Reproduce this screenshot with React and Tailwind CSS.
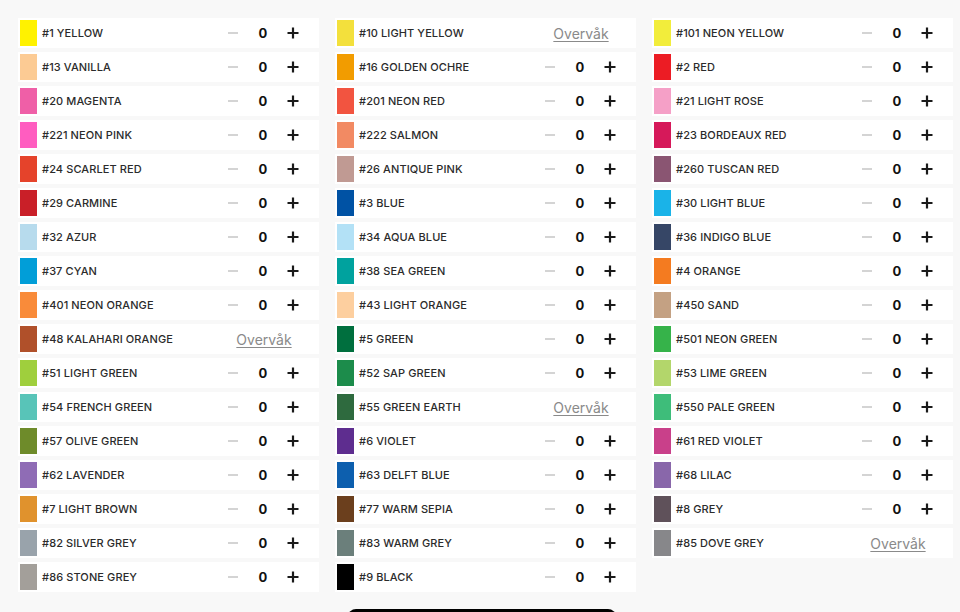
import React from "react";

const columns = [
  [
    ["#1 YELLOW", "#fff200"],
    ["#13 VANILLA", "#fccb94"],
    ["#20 MAGENTA", "#ef5fa7"],
    ["#221 NEON PINK", "#ff5dc0"],
    ["#24 SCARLET RED", "#e5432b"],
    ["#29 CARMINE", "#c91f28"],
    ["#32 AZUR", "#b7dbed"],
    ["#37 CYAN", "#019ed8"],
    ["#401 NEON ORANGE", "#f98b3a"],
    ["#48 KALAHARI ORANGE", "#b0502a", true],
    ["#51 LIGHT GREEN", "#9fcf3d"],
    ["#54 FRENCH GREEN", "#58c4b8"],
    ["#57 OLIVE GREEN", "#6e8b2a"],
    ["#62 LAVENDER", "#8f6cb5"],
    ["#7 LIGHT BROWN", "#e0922d"],
    ["#82 SILVER GREY", "#99a3ab"],
    ["#86 STONE GREY", "#a39f9a"],
  ],
  [
    ["#10 LIGHT YELLOW", "#f3e03c", true],
    ["#16 GOLDEN OCHRE", "#f29c00"],
    ["#201 NEON RED", "#f25440"],
    ["#222 SALMON", "#f28a63"],
    ["#26 ANTIQUE PINK", "#c09a93"],
    ["#3 BLUE", "#0052a4"],
    ["#34 AQUA BLUE", "#b3e1f6"],
    ["#38 SEA GREEN", "#00a29e"],
    ["#43 LIGHT ORANGE", "#fdcf9f"],
    ["#5 GREEN", "#006f3e"],
    ["#52 SAP GREEN", "#1c8c4b"],
    ["#55 GREEN EARTH", "#2e6a3e", true],
    ["#6 VIOLET", "#5e2d8f"],
    ["#63 DELFT BLUE", "#0d5fae"],
    ["#77 WARM SEPIA", "#6b3f1d"],
    ["#83 WARM GREY", "#6b7f7b"],
    ["#9 BLACK", "#000000"],
  ],
  [
    ["#101 NEON YELLOW", "#f2ed3b"],
    ["#2 RED", "#ec1c24"],
    ["#21 LIGHT ROSE", "#f5a0c7"],
    ["#23 BORDEAUX RED", "#d6195a"],
    ["#260 TUSCAN RED", "#8a5572"],
    ["#30 LIGHT BLUE", "#1ab3e8"],
    ["#36 INDIGO BLUE", "#364666"],
    ["#4 ORANGE", "#f47b20"],
    ["#450 SAND", "#c4a183"],
    ["#501 NEON GREEN", "#36b34a"],
    ["#53 LIME GREEN", "#b3d66b"],
    ["#550 PALE GREEN", "#3ebd7a"],
    ["#61 RED VIOLET", "#c9408a"],
    ["#68 LILAC", "#8967aa"],
    ["#8 GREY", "#5f515a"],
    ["#85 DOVE GREY", "#87878a", true],
  ],
];

const Row = ({ name, color, soldOut }) => (
  <div className="flex items-center h-[30px] bg-white pl-[2px] pr-[11px]">
    <div className="w-[17px] h-[26px] shrink-0" style={{ backgroundColor: color }} />
    <div className="ml-[5px] flex-1 text-[11px] font-medium text-[#2b2b2b] tracking-[0.1px]">
      {name}
    </div>
    {soldOut ? (
      <div className="w-[90px] pl-[2px] text-center text-[14px] text-[#8a8a8a] underline underline-offset-2">
        Overvåk
      </div>
    ) : (
      <div className="flex items-center w-[90px]">
        <button type="button" className="w-[30px] flex justify-center">
          <span className="block w-[10px] h-[2px] bg-[#d4d4d4]" />
        </button>
        <span className="w-[30px] pt-[2px] text-center text-[13px] font-bold text-[#111]">0</span>
        <button type="button" className="w-[30px] flex justify-center">
          <svg width="12" height="12" viewBox="0 0 12 12">
            <path d="M6 0.5v11M0.5 6h11" stroke="#1a1a1a" strokeWidth="2.2" />
          </svg>
        </button>
      </div>
    )}
  </div>
);

export default function App() {
  return (
    <div
      className="min-h-screen bg-[#f8f8f8] pt-[18px] pl-[18px]"
      style={{ fontFamily: "Inter, 'Noto Sans', sans-serif" }}
    >
      <div className="grid grid-cols-[301px_301px_301px] gap-x-[16px]">
        {columns.map((col, i) => (
          <div key={i} className="flex flex-col gap-[4px]">
            {col.map(([name, color, soldOut]) => (
              <Row key={name} name={name} color={color} soldOut={soldOut} />
            ))}
          </div>
        ))}
      </div>
      <div className="mt-[17px] mr-[15px] flex justify-center">
        <button type="button" className="w-[268px] h-[44px] rounded-lg bg-black" />
      </div>
    </div>
  );
}
